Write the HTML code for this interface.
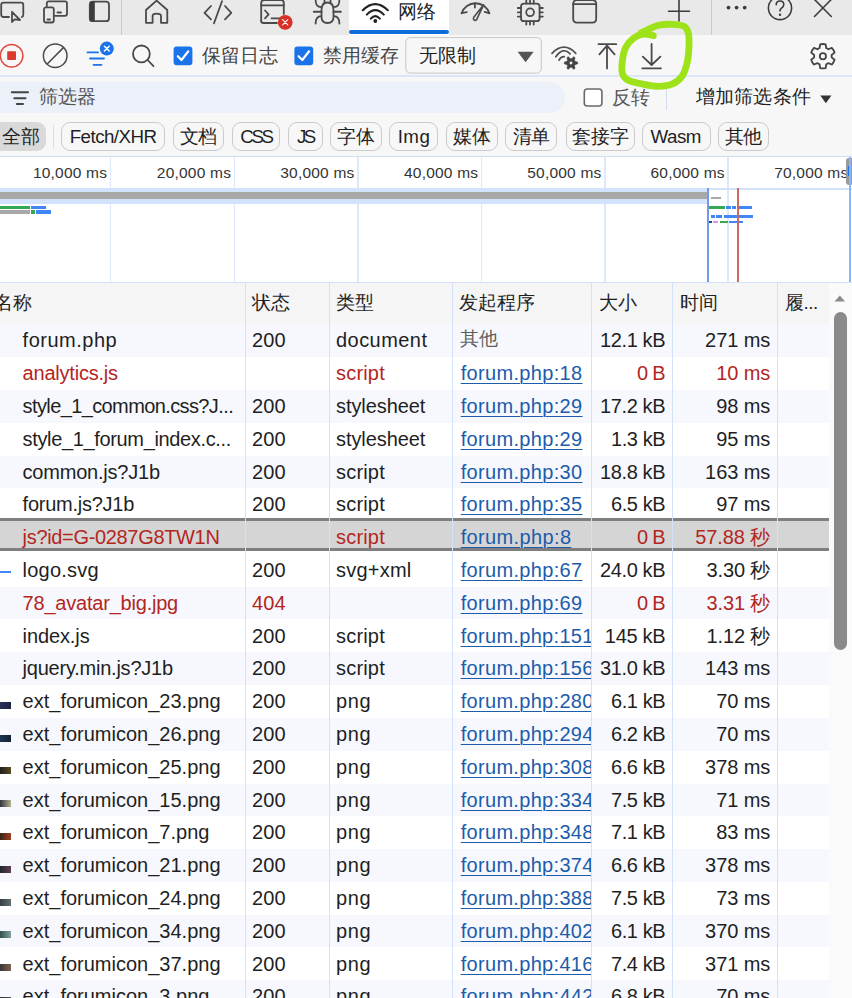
<!DOCTYPE html>
<html><head><meta charset="utf-8"><style>
*{margin:0;padding:0;box-sizing:border-box}
html,body{width:852px;height:998px;overflow:hidden;background:#fff}
body{position:relative;font-family:"Liberation Sans",sans-serif;font-size:20px;color:#1f1f1f}
.a{position:absolute}
.t{position:absolute;white-space:nowrap;line-height:1}
.red{color:#b3261e}
.gray{color:#5f5f5f}
.lab{color:#333}
.link{color:#1c5cab;text-decoration:underline;text-underline-offset:3px;text-decoration-thickness:1px}
svg{position:absolute;overflow:visible}
</style></head>
<body>
<div class="a" style="left:0;top:0;width:852px;height:35px;background:#e9e9e9"></div>
<div class="a" style="left:348.5px;top:0;width:100.5px;height:35px;background:#fff"></div>
<div class="a" style="left:348.5px;top:30px;width:100px;height:4px;background:#0f6cd6;border-radius:2px"></div>
<div class="a" style="left:121px;top:0;width:1px;height:35px;background:#c9c9c9"></div>
<div class="a" style="left:711px;top:0;width:1px;height:35px;background:#c9c9c9"></div>
<svg class="a" style="left:0;top:0" width="852" height="35" viewBox="0 0 852 35">
<g fill="none" stroke="#4a4a4a" stroke-width="1.8" stroke-linecap="round" stroke-linejoin="round">
<path d="M9 17 H3.5 Q1.2 17 1.2 14.5 V5 Q1.2 2.7 3.5 2.7 H21 Q23.3 2.7 23.3 5 V14.5 Q23.3 16.5 21.8 17"/>
<path d="M12 11.8 L12 22 L14.6 19.3 L20 20 Z"/>
<path d="M46.8 6.8 V3.3 Q46.8 1.3 48.8 1.3 H65 Q67 1.3 67 3.3 V13.8 Q67 15.8 65 15.8 H54.5"/>
<path d="M57.5 12.5 H61"/>
<rect x="44" y="7.3" width="9.8" height="15.2" rx="2"/>
<path d="M47.5 19.5 H50"/>
<rect x="89.8" y="1.6" width="19.2" height="19.6" rx="3"/>
</g>
<rect x="89.8" y="1.6" width="5" height="19.6" fill="#3c3c3c"/>
<g fill="none" stroke="#4a4a4a" stroke-width="1.8" stroke-linecap="round" stroke-linejoin="round">
<path d="M146 22.8 V10 L156.6 0.6 L167.3 10 V22.8 H161 V16 Q161 13.6 156.6 13.6 Q152.6 13.6 152.6 16 V22.8 Z"/>
<path d="M211 6 L204.5 12.8 L211 19.3"/>
<path d="M222 1.2 L214 23.3"/>
<path d="M225 6 L231.3 12.8 L225 19.3"/>
<path d="M261.2 21 V3 Q261.2 0 264 0 H281 Q283.8 0 283.8 3 V14"/>
<path d="M261.2 21 Q261.2 23 263.5 23 H277"/>
<path d="M261.2 5.3 H283.8"/>
<path d="M265 10.5 L268.6 14.3 L265 18.3"/>
<path d="M271.5 18.3 H280"/>
</g>
<circle cx="285.2" cy="22.3" r="7.4" fill="#d93025"/>
<path d="M282.6 19.7 L287.8 24.9 M287.8 19.7 L282.6 24.9" stroke="#fff" stroke-width="1.1" stroke-linecap="round"/>
<g fill="none" stroke="#4a4a4a" stroke-width="1.8" stroke-linecap="round" stroke-linejoin="round">
<path d="M321.5 10 Q321.5 2.5 327.5 2.5 Q333.5 2.5 333.5 10 V17 Q333.5 23 327.5 23 Q321.5 23 321.5 17 Z"/>
<path d="M313.8 11.7 H321.5 M333.5 11.7 H340.8" stroke-width="2"/>
<path d="M321.2 7.2 Q315.6 7 315.6 0 M333.8 7.2 Q339.4 7 339.4 0"/>
<path d="M321.2 16.2 Q315.6 16.4 315.6 23.5 M333.8 16.2 Q339.4 16.4 339.4 23.5"/>
<path d="M324.5 3 V0 M330.5 3 V0"/>
</g>
<g fill="none" stroke="#222" stroke-width="2.1" stroke-linecap="round">
<path d="M362.8 10.2 Q375.3 -2 387.8 10.2"/>
<path d="M366.8 14.6 Q375.3 5.6 383.8 14.6"/>
<path d="M370.8 18.6 Q375.3 13.6 379.8 18.6"/>
</g>
<circle cx="375.3" cy="21" r="1.9" fill="#1f1f1f"/>
<g fill="none" stroke="#4a4a4a" stroke-width="1.8" stroke-linecap="round" stroke-linejoin="round">
<path d="M461.6 13.4 A14.6 14.6 0 0 1 489.4 13.4"/>
<path d="M461.6 13.2 L466.8 12.2 M474.9 3.3 V7.6 M484.6 11.8 L489.2 13.2"/>
<path d="M483.6 4.8 L476.6 19.6 Q475.2 21 473.9 19.9 Q473 19 473.6 17.6 Z" stroke-width="1.6"/>
</g>
<g fill="none" stroke="#4a4a4a" stroke-width="1.8" stroke-linecap="round" stroke-linejoin="round">
<rect x="521" y="3.6" width="18.6" height="17.6" rx="3"/>
<circle cx="530.1" cy="12.3" r="3.9"/>
<path d="M526.3 3.6 V0.5 M530 3.6 V0.5 M533.7 3.6 V0.5 M526.3 21.2 V24.6 M530 21.2 V24.6 M533.7 21.2 V24.6"/>
<path d="M521 8 H517.8 M521 12.3 H517.8 M521 16.6 H517.8 M539.6 8 H542.8 M539.6 12.3 H542.8 M539.6 16.6 H542.8"/>
</g>
<g fill="none" stroke="#4a4a4a" stroke-width="1.8" stroke-linecap="round" stroke-linejoin="round">
<path d="M573.2 4 Q573.2 0 577 0 H592.3 Q596.2 0 596.2 4 V18.8 Q596.2 22.6 592.3 22.6 H577 Q573.2 22.6 573.2 18.8 Z"/>
<path d="M573.2 4.2 H596.2"/>
</g>
<g fill="none" stroke="#3c3c3c" stroke-width="1.6" stroke-linecap="round">
<path d="M668.5 11.2 H689.5 M679 0 V21"/>
<path d="M814.5 -0.5 L831.3 16.5 M831.3 -0.5 L814.5 16.5"/>
<circle cx="780" cy="8" r="11.6"/>
<path d="M776.2 4.8 Q776.2 1 780 1 Q783.8 1 783.8 4.6 Q783.8 7 781.4 8.2 Q780 9 780 11"/>
</g>
<circle cx="780" cy="14.8" r="1.2" fill="#3c3c3c"/>
<circle cx="728.5" cy="7.6" r="1.9" fill="#3c3c3c"/>
<circle cx="736.6" cy="7.6" r="1.9" fill="#3c3c3c"/>
<circle cx="744.7" cy="7.6" r="1.9" fill="#3c3c3c"/>
</svg>
<div class="t " style="left:398px;top:2.5px;font-size:18.75px;color:#1f1f1f">网络</div>
<div class="a" style="left:0;top:35px;width:852px;height:40px;background:#f7f7f7"></div>
<div class="a" style="left:0;top:75px;width:852px;height:2px;background:#dce6f6"></div>
<svg class="a" style="left:0;top:35px" width="852" height="40" viewBox="0 35 852 40">
<circle cx="11.6" cy="55.7" r="11.3" fill="none" stroke="#e04a40" stroke-width="1.5"/>
<rect x="7.2" y="51.3" width="8.8" height="8.8" rx="0.8" fill="#dc3a30"/>
<g fill="none" stroke="#4a4a4a" stroke-width="1.8" stroke-linecap="round" stroke-linejoin="round">
<circle cx="55.2" cy="55.7" r="11.8" stroke-width="1.5"/>
<path d="M47.2 64 L63.4 47.6" stroke-width="1.5"/>
<circle cx="141.4" cy="53.9" r="8.4"/>
<path d="M147.6 60 L153.5 66.2"/>
</g>
<g fill="none" stroke="#1a73e8" stroke-width="1.8" stroke-linecap="round">
<path d="M87.5 52.4 H98 M90 58.5 H104 M93.5 64.8 H101.5"/>
</g>
<circle cx="106.8" cy="48.6" r="7" fill="#1a73e8"/>
<path d="M104.4 46.2 L109.2 51 M109.2 46.2 L104.4 51" stroke="#fff" stroke-width="1.5" stroke-linecap="round"/>
<rect x="173.6" y="46.5" width="18.8" height="18.8" rx="3" fill="#1a73e8"/>
<path d="M177.8 56.2 L181.5 60 L188.3 51.3" fill="none" stroke="#fff" stroke-width="2.2" stroke-linecap="round" stroke-linejoin="round"/>
<rect x="294.4" y="46.5" width="18.8" height="18.8" rx="3" fill="#1a73e8"/>
<path d="M298.6 56.2 L302.3 60 L309.1 51.3" fill="none" stroke="#fff" stroke-width="2.2" stroke-linecap="round" stroke-linejoin="round"/>
<rect x="405.8" y="37.6" width="135.5" height="35.5" rx="4.5" fill="#f7f7f7" stroke="#c6c6c6" stroke-width="1"/>
<path d="M517.6 51.8 H533.6 L525.6 62.2 Z" fill="#555"/>
<g fill="none" stroke="#4a4a4a" stroke-width="1.8" stroke-linecap="round" stroke-linejoin="round">
<path d="M552 53.3 Q564 41 575.8 53.3" stroke="#505050" stroke-width="1.7"/>
<path d="M555.8 56.8 Q563 46.5 570.2 53.8" stroke="#505050" stroke-width="1.7"/>
<path d="M559 60.2 Q560.8 56.6 564.3 56.7" stroke="#505050" stroke-width="1.7"/>
<path d="M607 68.5 V45 M598.5 44.2 H616.2 M599.4 54.3 L607 45.6 L614.6 54.3"/>
<path d="M651.6 44 V64.5 M642.8 56.6 L651.6 65 L660.4 56.6 M642.3 68.3 H661"/>
</g>
<path d="M574.93 61.25 L577.76 62.29 L577.76 63.71 L574.93 64.75 L574.48 65.53 L575.00 68.50 L573.77 69.21 L571.45 67.28 L570.55 67.28 L568.23 69.21 L567.00 68.50 L567.52 65.53 L567.07 64.75 L564.24 63.71 L564.24 62.29 L567.07 61.25 L567.52 60.47 L567.00 57.50 L568.23 56.79 L570.55 58.72 L571.45 58.72 L573.77 56.79 L575.00 57.50 L574.48 60.47 Z" fill="#444" stroke="#444" stroke-width="0.6" stroke-linejoin="round"/>
<circle cx="571" cy="63" r="1.4" fill="#f7f7f7"/>
<g fill="none" stroke="#444" stroke-width="1.8" stroke-linejoin="round">
<path d="M819.60 48.04 L820.16 44.31 A12.2 12.2 0 0 1 825.64 44.31 L826.20 48.04 A8.8 8.8 0 0 1 828.32 49.27 L831.82 47.88 A12.2 12.2 0 0 1 834.57 52.63 L831.61 54.98 A8.8 8.8 0 0 1 831.61 57.42 L834.57 59.77 A12.2 12.2 0 0 1 831.82 64.52 L828.32 63.13 A8.8 8.8 0 0 1 826.20 64.36 L825.64 68.09 A12.2 12.2 0 0 1 820.16 68.09 L819.60 64.36 A8.8 8.8 0 0 1 817.48 63.13 L813.98 64.52 A12.2 12.2 0 0 1 811.23 59.77 L814.19 57.42 A8.8 8.8 0 0 1 814.19 54.98 L811.23 52.63 A12.2 12.2 0 0 1 813.98 47.88 L817.48 49.27 A8.8 8.8 0 0 1 819.60 48.04 Z"/>
<circle cx="822.9" cy="56.2" r="3.1"/>
</g>
</svg>
<div class="t " style="left:202.4px;top:46.5px;font-size:18.75px;color:#444">保留日志</div>
<div class="t " style="left:322.6px;top:46.5px;font-size:18.75px;color:#444">禁用缓存</div>
<div class="t " style="left:418.8px;top:46.5px;font-size:18.75px;color:#1f1f1f">无限制</div>
<div class="a" style="left:0;top:77px;width:852px;height:80px;background:#f7f7f7"></div>
<div class="a" style="left:-20px;top:81.5px;width:584.5px;height:31px;background:#ebf0f9;border-radius:15.5px"></div>
<svg class="a" style="left:0;top:77px" width="852" height="80" viewBox="0 77 852 80">
<path d="M11.8 92.3 H28 M14.3 98.2 H25.5 M16.8 104 H23" stroke="#444" stroke-width="2" stroke-linecap="round"/>
<rect x="584.3" y="89" width="17.6" height="17" rx="3" fill="#fff" stroke="#6a6a6a" stroke-width="1.6"/>
<path d="M820.3 95.5 H831.4 L825.85 103.2 Z" fill="#333"/>
</svg>
<div class="a" style="left:666px;top:87px;width:1.2px;height:23px;background:#d3def2"></div>
<div class="t " style="left:38.5px;top:88px;font-size:18.75px;color:#555">筛选器</div>
<div class="t " style="left:611.6px;top:88.5px;font-size:18.75px;color:#555">反转</div>
<div class="t " style="left:696.2px;top:88px;font-size:18.75px;color:#1f1f1f;letter-spacing:0.1px">增加筛选条件</div>
<div class="a" style="left:-10px;top:122px;width:56px;height:29.4px;background:#d9d9d9;border-radius:9px"></div>
<div class="t " style="left:2.3px;top:127.5px;font-size:18.75px;">全部</div>
<div class="a" style="left:52.5px;top:124.5px;width:1.2px;height:24.5px;background:#d3def2"></div>
<div class="a" style="left:60.6px;top:122px;width:104.9px;height:29.4px;border:1.2px solid #cbcbcb;border-radius:9px;background:#f7f7f7"></div>
<div class="t " style="left:69.7px;top:128.2px;letter-spacing:-0.55px;font-size:18.75px;">Fetch/XHR</div>
<div class="a" style="left:172.5px;top:122px;width:51.900000000000006px;height:29.4px;border:1.2px solid #cbcbcb;border-radius:9px;background:#f7f7f7"></div>
<div class="t " style="left:179.7px;top:128.2px;letter-spacing:-0.19px;font-size:18.75px;">文档</div>
<div class="a" style="left:231.7px;top:122px;width:48.60000000000002px;height:29.4px;border:1.2px solid #cbcbcb;border-radius:9px;background:#f7f7f7"></div>
<div class="t " style="left:240.3px;top:128.2px;letter-spacing:-2.39px;font-size:18.75px;">CSS</div>
<div class="a" style="left:288px;top:122px;width:34.5px;height:29.4px;border:1.2px solid #cbcbcb;border-radius:9px;background:#f7f7f7"></div>
<div class="t " style="left:297.0px;top:128.2px;letter-spacing:-2.68px;font-size:18.75px;">JS</div>
<div class="a" style="left:330.3px;top:122px;width:51.39999999999998px;height:29.4px;border:1.2px solid #cbcbcb;border-radius:9px;background:#f7f7f7"></div>
<div class="t " style="left:337.2px;top:128.2px;letter-spacing:-0.19px;font-size:18.75px;">字体</div>
<div class="a" style="left:389.4px;top:122px;width:49.10000000000002px;height:29.4px;border:1.2px solid #cbcbcb;border-radius:9px;background:#f7f7f7"></div>
<div class="t " style="left:397.7px;top:128.2px;letter-spacing:0.43px;font-size:18.75px;">Img</div>
<div class="a" style="left:446.4px;top:122px;width:51.400000000000034px;height:29.4px;border:1.2px solid #cbcbcb;border-radius:9px;background:#f7f7f7"></div>
<div class="t " style="left:453.4px;top:128.2px;letter-spacing:-0.19px;font-size:18.75px;">媒体</div>
<div class="a" style="left:505.2px;top:122px;width:52.19999999999999px;height:29.4px;border:1.2px solid #cbcbcb;border-radius:9px;background:#f7f7f7"></div>
<div class="t " style="left:512.5px;top:128.2px;letter-spacing:-0.19px;font-size:18.75px;">清单</div>
<div class="a" style="left:565.6px;top:122px;width:69.0px;height:29.4px;border:1.2px solid #cbcbcb;border-radius:9px;background:#f7f7f7"></div>
<div class="t " style="left:572.0px;top:128.2px;letter-spacing:-0.19px;font-size:18.75px;">套接字</div>
<div class="a" style="left:641.6px;top:122px;width:69.0px;height:29.4px;border:1.2px solid #cbcbcb;border-radius:9px;background:#f7f7f7"></div>
<div class="t " style="left:650.6px;top:128.2px;letter-spacing:-0.55px;font-size:18.75px;">Wasm</div>
<div class="a" style="left:717.6px;top:122px;width:51.39999999999998px;height:29.4px;border:1.2px solid #cbcbcb;border-radius:9px;background:#f7f7f7"></div>
<div class="t " style="left:724.5px;top:128.2px;letter-spacing:-0.19px;font-size:18.75px;">其他</div>
<div class="a" style="left:0;top:155.5px;width:852px;height:1.5px;background:#d3def2"></div>
<div class="a" style="left:0;top:157px;width:852px;height:125px;background:#fff"></div>
<div class="a" style="left:109.8px;top:157px;width:1.5px;height:125px;background:#dde8fb"></div>
<div class="a" style="left:233.7px;top:157px;width:1.5px;height:125px;background:#dde8fb"></div>
<div class="a" style="left:357.1px;top:157px;width:1.5px;height:125px;background:#dde8fb"></div>
<div class="a" style="left:480.9px;top:157px;width:1.5px;height:125px;background:#dde8fb"></div>
<div class="a" style="left:604.1px;top:157px;width:1.5px;height:125px;background:#dde8fb"></div>
<div class="a" style="left:727.4px;top:157px;width:1.5px;height:125px;background:#dde8fb"></div>
<div class="a" style="left:0;top:188px;width:852px;height:1.5px;background:#d3e2fb"></div>
<div class="t lab" style="right:745.0px;top:164.5px;letter-spacing:0.21px;margin-right:-0.21px;font-size:15.5px;">10,000 ms</div>
<div class="t lab" style="right:621.1px;top:164.5px;letter-spacing:0.21px;margin-right:-0.21px;font-size:15.5px;">20,000 ms</div>
<div class="t lab" style="right:497.7px;top:164.5px;letter-spacing:0.21px;margin-right:-0.21px;font-size:15.5px;">30,000 ms</div>
<div class="t lab" style="right:373.90000000000003px;top:164.5px;letter-spacing:0.21px;margin-right:-0.21px;font-size:15.5px;">40,000 ms</div>
<div class="t lab" style="right:250.69999999999993px;top:164.5px;letter-spacing:0.21px;margin-right:-0.21px;font-size:15.5px;">50,000 ms</div>
<div class="t lab" style="right:127.39999999999998px;top:164.5px;letter-spacing:0.21px;margin-right:-0.21px;font-size:15.5px;">60,000 ms</div>
<div class="t lab" style="right:3.7999999999999545px;top:164.5px;letter-spacing:0.21px;margin-right:-0.21px;font-size:15.5px;">70,000 ms</div>
<div class="a" style="left:845.5px;top:158px;width:8px;height:27px;background:#9a9a9a;border-radius:3px"></div>
<div class="a" style="left:848.2px;top:166px;width:2px;height:10px;background:#1a73e8"></div>
<div class="a" style="left:849px;top:157px;width:1.5px;height:125px;background:#8ab4f8"></div>
<div class="a" style="left:0;top:188.6px;width:707.5px;height:15.4px;background:#d3e3fd"></div>
<div class="a" style="left:0;top:192px;width:707.5px;height:7px;background:#a8a8a8"></div>
<div class="a" style="left:0px;top:205.6px;width:30px;height:3.3px;background:#34a853"></div>
<div class="a" style="left:0px;top:210.4px;width:30px;height:3.6px;background:#a8a8a8"></div>
<div class="a" style="left:31px;top:206px;width:14.799999999999997px;height:3px;background:#4285f4"></div>
<div class="a" style="left:31px;top:210.4px;width:4px;height:3.6px;background:#34a853"></div>
<div class="a" style="left:36.2px;top:210.4px;width:14.399999999999999px;height:3.6px;background:#4285f4"></div>
<div class="a" style="left:711px;top:196.8px;width:10.200000000000045px;height:2.6px;background:#a8a8a8"></div>
<div class="a" style="left:708.5px;top:205.9px;width:16.5px;height:3px;background:#34a853"></div>
<div class="a" style="left:726.2px;top:205.9px;width:4.5px;height:3px;background:#4285f4"></div>
<div class="a" style="left:732.3px;top:205.9px;width:3.7000000000000455px;height:3px;background:#4285f4"></div>
<div class="a" style="left:738px;top:205.9px;width:13.600000000000023px;height:3px;background:#4285f4"></div>
<div class="a" style="left:711px;top:215.3px;width:3.7000000000000455px;height:3px;background:#4285f4"></div>
<div class="a" style="left:716.3px;top:215.3px;width:5.7000000000000455px;height:3px;background:#4285f4"></div>
<div class="a" style="left:723.7px;top:215.3px;width:29.199999999999932px;height:3px;background:#4285f4"></div>
<div class="a" style="left:707.3px;top:220.7px;width:4.900000000000091px;height:2.5px;background:#01579b"></div>
<div class="a" style="left:713.4px;top:220.7px;width:4.600000000000023px;height:2.5px;background:#e68df5"></div>
<div class="a" style="left:719.6px;top:220.7px;width:8.199999999999932px;height:2.5px;background:#34a853"></div>
<div class="a" style="left:729.3px;top:220.7px;width:13.900000000000091px;height:2.5px;background:#4285f4"></div>
<div class="a" style="left:706.9px;top:188px;width:2.6px;height:94px;background:#6f9be8"></div>
<div class="a" style="left:736.9px;top:188px;width:2.4px;height:94px;background:#cc6a60"></div>
<div class="a" style="left:0;top:282px;width:852px;height:42px;background:#f5f5f5"></div>
<div class="a" style="left:0;top:281.5px;width:852px;height:1.5px;background:#d3e2fb"></div>
<div class="a" style="left:0;top:323.6px;width:828.5px;height:1.5px;background:#d3e2fb"></div>
<div class="a" style="left:0;top:324.3px;width:828.5px;height:32.8px;background:#f6f8fd"></div>
<div class="a" style="left:0;top:389.9px;width:828.5px;height:32.8px;background:#f6f8fd"></div>
<div class="a" style="left:0;top:455.5px;width:828.5px;height:32.8px;background:#f6f8fd"></div>
<div class="a" style="left:0;top:518.0px;width:828.5px;height:32.5px;background:#d5d5d5;border-top:3.3px solid #7f7f7f;border-bottom:3.2px solid #7f7f7f"></div>
<div class="a" style="left:0;top:586.7px;width:828.5px;height:32.8px;background:#f6f8fd"></div>
<div class="a" style="left:0;top:652.3px;width:828.5px;height:32.8px;background:#f6f8fd"></div>
<div class="a" style="left:0;top:717.9px;width:828.5px;height:32.8px;background:#f6f8fd"></div>
<div class="a" style="left:0;top:783.5px;width:828.5px;height:32.8px;background:#f6f8fd"></div>
<div class="a" style="left:0;top:849.0999999999999px;width:828.5px;height:32.8px;background:#f6f8fd"></div>
<div class="a" style="left:0;top:914.7px;width:828.5px;height:32.8px;background:#f6f8fd"></div>
<div class="a" style="left:0;top:980.3px;width:828.5px;height:32.8px;background:#f6f8fd"></div>
<div class="a" style="left:244.9px;top:282px;width:1.2px;height:716px;background:#d3e2fb"></div>
<div class="a" style="left:328.59999999999997px;top:282px;width:1.2px;height:716px;background:#d3e2fb"></div>
<div class="a" style="left:452.29999999999995px;top:282px;width:1.2px;height:716px;background:#d3e2fb"></div>
<div class="a" style="left:591.0px;top:282px;width:1.2px;height:716px;background:#d3e2fb"></div>
<div class="a" style="left:672.0px;top:282px;width:1.2px;height:716px;background:#d3e2fb"></div>
<div class="a" style="left:777.1999999999999px;top:282px;width:1.2px;height:716px;background:#d3e2fb"></div>
<div class="t " style="left:-6.5px;top:293.5px;font-size:18.75px;">名称</div>
<div class="t " style="left:252px;top:293.5px;font-size:18.75px;">状态</div>
<div class="t " style="left:336px;top:293.5px;font-size:18.75px;">类型</div>
<div class="t " style="left:459.3px;top:293.5px;font-size:18.75px;">发起程序</div>
<div class="t " style="left:598.5px;top:293.5px;font-size:18.75px;">大小</div>
<div class="t " style="left:679.5px;top:293.5px;font-size:18.75px;">时间</div>
<div class="t " style="left:785px;top:293.5px;letter-spacing:-0.47px;font-size:18.75px;">履...</div>
<div class="t " style="left:22.6px;top:330.3px;letter-spacing:0.5px;">forum.php</div>
<div class="t " style="left:252.1px;top:330.3px;letter-spacing:0.06px;">200</div>
<div class="t " style="left:336px;top:330.3px;letter-spacing:0.45px;">document</div>
<div class="t gray" style="left:460px;top:330.3px;font-size:18.75px;">其他</div>
<div class="t " style="right:186.39999999999998px;top:330.3px;letter-spacing:-0.35px;margin-right:0.35px;">12.1 kB</div>
<div class="t " style="right:81.70000000000005px;top:330.3px;letter-spacing:-0.07px;margin-right:0.07px;">271 ms</div>
<div class="t red" style="left:22.6px;top:363.1px;letter-spacing:-0.21px;">analytics.js</div>
<div class="t red" style="left:336px;top:363.1px;letter-spacing:0.19px;">script</div>
<div class="a" style="left:452.9px;top:357.1px;width:138.6px;height:32.8px;overflow:hidden"><div class="t link" style="left:7.8px;top:6.0px;letter-spacing:0.33px;">forum.php:18</div></div>
<div class="t red" style="right:186.39999999999998px;top:363.1px;letter-spacing:-0.68px;margin-right:0.68px;">0 B</div>
<div class="t red" style="right:81.70000000000005px;top:363.1px;letter-spacing:-0.09px;margin-right:0.09px;">10 ms</div>
<div class="t " style="left:22.6px;top:395.9px;letter-spacing:-0.61px;">style_1_common.css?J...</div>
<div class="t " style="left:252.1px;top:395.9px;letter-spacing:0.06px;">200</div>
<div class="t " style="left:336px;top:395.9px;letter-spacing:-0.08px;">stylesheet</div>
<div class="a" style="left:452.9px;top:389.9px;width:138.6px;height:32.8px;overflow:hidden"><div class="t link" style="left:7.8px;top:6.0px;letter-spacing:0.33px;">forum.php:29</div></div>
<div class="t " style="right:186.39999999999998px;top:395.9px;letter-spacing:-0.35px;margin-right:0.35px;">17.2 kB</div>
<div class="t " style="right:81.70000000000005px;top:395.9px;letter-spacing:-0.09px;margin-right:0.09px;">98 ms</div>
<div class="t " style="left:22.6px;top:428.7px;letter-spacing:-0.35px;">style_1_forum_index.c...</div>
<div class="t " style="left:252.1px;top:428.7px;letter-spacing:0.06px;">200</div>
<div class="t " style="left:336px;top:428.7px;letter-spacing:-0.08px;">stylesheet</div>
<div class="a" style="left:452.9px;top:422.7px;width:138.6px;height:32.8px;overflow:hidden"><div class="t link" style="left:7.8px;top:6.0px;letter-spacing:0.33px;">forum.php:29</div></div>
<div class="t " style="right:186.39999999999998px;top:428.7px;letter-spacing:-0.41px;margin-right:0.41px;">1.3 kB</div>
<div class="t " style="right:81.70000000000005px;top:428.7px;letter-spacing:-0.09px;margin-right:0.09px;">95 ms</div>
<div class="t " style="left:22.6px;top:461.5px;letter-spacing:-0.22px;">common.js?J1b</div>
<div class="t " style="left:252.1px;top:461.5px;letter-spacing:0.06px;">200</div>
<div class="t " style="left:336px;top:461.5px;letter-spacing:0.19px;">script</div>
<div class="a" style="left:452.9px;top:455.5px;width:138.6px;height:32.8px;overflow:hidden"><div class="t link" style="left:7.8px;top:6.0px;letter-spacing:0.33px;">forum.php:30</div></div>
<div class="t " style="right:186.39999999999998px;top:461.5px;letter-spacing:-0.35px;margin-right:0.35px;">18.8 kB</div>
<div class="t " style="right:81.70000000000005px;top:461.5px;letter-spacing:-0.07px;margin-right:0.07px;">163 ms</div>
<div class="t " style="left:22.6px;top:494.3px;letter-spacing:-0.25px;">forum.js?J1b</div>
<div class="t " style="left:252.1px;top:494.3px;letter-spacing:0.06px;">200</div>
<div class="t " style="left:336px;top:494.3px;letter-spacing:0.19px;">script</div>
<div class="a" style="left:452.9px;top:488.3px;width:138.6px;height:32.8px;overflow:hidden"><div class="t link" style="left:7.8px;top:6.0px;letter-spacing:0.33px;">forum.php:35</div></div>
<div class="t " style="right:186.39999999999998px;top:494.3px;letter-spacing:-0.41px;margin-right:0.41px;">6.5 kB</div>
<div class="t " style="right:81.70000000000005px;top:494.3px;letter-spacing:-0.09px;margin-right:0.09px;">97 ms</div>
<div class="t red" style="left:22.6px;top:527.1px;letter-spacing:-0.33px;">js?id=G-0287G8TW1N</div>
<div class="t red" style="left:336px;top:527.1px;letter-spacing:0.19px;">script</div>
<div class="a" style="left:452.9px;top:521.1px;width:138.6px;height:32.8px;overflow:hidden"><div class="t link" style="left:7.8px;top:6.0px;letter-spacing:0.36px;">forum.php:8</div></div>
<div class="t red" style="right:186.39999999999998px;top:527.1px;letter-spacing:-0.68px;margin-right:0.68px;">0 B</div>
<div class="t red" style="right:81.70000000000005px;top:527.1px;letter-spacing:-0.1px;margin-right:0.1px;">57.88 秒</div>
<div class="t " style="left:22.6px;top:559.9px;letter-spacing:0.22px;">logo.svg</div>
<div class="t " style="left:252.1px;top:559.9px;letter-spacing:0.06px;">200</div>
<div class="t " style="left:336px;top:559.9px;letter-spacing:0.23px;">svg+xml</div>
<div class="a" style="left:452.9px;top:553.9px;width:138.6px;height:32.8px;overflow:hidden"><div class="t link" style="left:7.8px;top:6.0px;letter-spacing:0.33px;">forum.php:67</div></div>
<div class="t " style="right:186.39999999999998px;top:559.9px;letter-spacing:-0.35px;margin-right:0.35px;">24.0 kB</div>
<div class="t " style="right:81.70000000000005px;top:559.9px;letter-spacing:-0.12px;margin-right:0.12px;">3.30 秒</div>
<div class="t red" style="left:22.6px;top:592.7px;letter-spacing:-0.21px;">78_avatar_big.jpg</div>
<div class="t red" style="left:252.1px;top:592.7px;letter-spacing:0.06px;">404</div>
<div class="a" style="left:452.9px;top:586.7px;width:138.6px;height:32.8px;overflow:hidden"><div class="t link" style="left:7.8px;top:6.0px;letter-spacing:0.33px;">forum.php:69</div></div>
<div class="t red" style="right:186.39999999999998px;top:592.7px;letter-spacing:-0.68px;margin-right:0.68px;">0 B</div>
<div class="t red" style="right:81.70000000000005px;top:592.7px;letter-spacing:-0.12px;margin-right:0.12px;">3.31 秒</div>
<div class="t " style="left:22.6px;top:625.5px;letter-spacing:-0.11px;">index.js</div>
<div class="t " style="left:252.1px;top:625.5px;letter-spacing:0.06px;">200</div>
<div class="t " style="left:336px;top:625.5px;letter-spacing:0.19px;">script</div>
<div class="a" style="left:452.9px;top:619.5px;width:138.6px;height:32.8px;overflow:hidden"><div class="t link" style="left:7.8px;top:6.0px;letter-spacing:0.31px;">forum.php:151</div></div>
<div class="t " style="right:186.39999999999998px;top:625.5px;letter-spacing:-0.3px;margin-right:0.3px;">145 kB</div>
<div class="t " style="right:81.70000000000005px;top:625.5px;letter-spacing:-0.12px;margin-right:0.12px;">1.12 秒</div>
<div class="t " style="left:22.6px;top:658.3px;letter-spacing:-0.23px;">jquery.min.js?J1b</div>
<div class="t " style="left:252.1px;top:658.3px;letter-spacing:0.06px;">200</div>
<div class="t " style="left:336px;top:658.3px;letter-spacing:0.19px;">script</div>
<div class="a" style="left:452.9px;top:652.3px;width:138.6px;height:32.8px;overflow:hidden"><div class="t link" style="left:7.8px;top:6.0px;letter-spacing:0.31px;">forum.php:156</div></div>
<div class="t " style="right:186.39999999999998px;top:658.3px;letter-spacing:-0.35px;margin-right:0.35px;">31.0 kB</div>
<div class="t " style="right:81.70000000000005px;top:658.3px;letter-spacing:-0.07px;margin-right:0.07px;">143 ms</div>
<div class="t " style="left:22.6px;top:691.0999999999999px;">ext_forumicon_23.png</div>
<div class="t " style="left:252.1px;top:691.0999999999999px;letter-spacing:0.06px;">200</div>
<div class="t " style="left:336px;top:691.0999999999999px;letter-spacing:0.62px;">png</div>
<div class="a" style="left:452.9px;top:685.0999999999999px;width:138.6px;height:32.8px;overflow:hidden"><div class="t link" style="left:7.8px;top:6.0px;letter-spacing:0.31px;">forum.php:280</div></div>
<div class="t " style="right:186.39999999999998px;top:691.0999999999999px;letter-spacing:-0.41px;margin-right:0.41px;">6.1 kB</div>
<div class="t " style="right:81.70000000000005px;top:691.0999999999999px;letter-spacing:-0.09px;margin-right:0.09px;">70 ms</div>
<div class="t " style="left:22.6px;top:723.9px;">ext_forumicon_26.png</div>
<div class="t " style="left:252.1px;top:723.9px;letter-spacing:0.06px;">200</div>
<div class="t " style="left:336px;top:723.9px;letter-spacing:0.62px;">png</div>
<div class="a" style="left:452.9px;top:717.9px;width:138.6px;height:32.8px;overflow:hidden"><div class="t link" style="left:7.8px;top:6.0px;letter-spacing:0.31px;">forum.php:294</div></div>
<div class="t " style="right:186.39999999999998px;top:723.9px;letter-spacing:-0.41px;margin-right:0.41px;">6.2 kB</div>
<div class="t " style="right:81.70000000000005px;top:723.9px;letter-spacing:-0.09px;margin-right:0.09px;">70 ms</div>
<div class="t " style="left:22.6px;top:756.7px;">ext_forumicon_25.png</div>
<div class="t " style="left:252.1px;top:756.7px;letter-spacing:0.06px;">200</div>
<div class="t " style="left:336px;top:756.7px;letter-spacing:0.62px;">png</div>
<div class="a" style="left:452.9px;top:750.7px;width:138.6px;height:32.8px;overflow:hidden"><div class="t link" style="left:7.8px;top:6.0px;letter-spacing:0.31px;">forum.php:308</div></div>
<div class="t " style="right:186.39999999999998px;top:756.7px;letter-spacing:-0.41px;margin-right:0.41px;">6.6 kB</div>
<div class="t " style="right:81.70000000000005px;top:756.7px;letter-spacing:-0.07px;margin-right:0.07px;">378 ms</div>
<div class="t " style="left:22.6px;top:789.5px;">ext_forumicon_15.png</div>
<div class="t " style="left:252.1px;top:789.5px;letter-spacing:0.06px;">200</div>
<div class="t " style="left:336px;top:789.5px;letter-spacing:0.62px;">png</div>
<div class="a" style="left:452.9px;top:783.5px;width:138.6px;height:32.8px;overflow:hidden"><div class="t link" style="left:7.8px;top:6.0px;letter-spacing:0.31px;">forum.php:334</div></div>
<div class="t " style="right:186.39999999999998px;top:789.5px;letter-spacing:-0.41px;margin-right:0.41px;">7.5 kB</div>
<div class="t " style="right:81.70000000000005px;top:789.5px;letter-spacing:-0.09px;margin-right:0.09px;">71 ms</div>
<div class="t " style="left:22.6px;top:822.3px;">ext_forumicon_7.png</div>
<div class="t " style="left:252.1px;top:822.3px;letter-spacing:0.06px;">200</div>
<div class="t " style="left:336px;top:822.3px;letter-spacing:0.62px;">png</div>
<div class="a" style="left:452.9px;top:816.3px;width:138.6px;height:32.8px;overflow:hidden"><div class="t link" style="left:7.8px;top:6.0px;letter-spacing:0.31px;">forum.php:348</div></div>
<div class="t " style="right:186.39999999999998px;top:822.3px;letter-spacing:-0.41px;margin-right:0.41px;">7.1 kB</div>
<div class="t " style="right:81.70000000000005px;top:822.3px;letter-spacing:-0.09px;margin-right:0.09px;">83 ms</div>
<div class="t " style="left:22.6px;top:855.0999999999999px;">ext_forumicon_21.png</div>
<div class="t " style="left:252.1px;top:855.0999999999999px;letter-spacing:0.06px;">200</div>
<div class="t " style="left:336px;top:855.0999999999999px;letter-spacing:0.62px;">png</div>
<div class="a" style="left:452.9px;top:849.0999999999999px;width:138.6px;height:32.8px;overflow:hidden"><div class="t link" style="left:7.8px;top:6.0px;letter-spacing:0.31px;">forum.php:374</div></div>
<div class="t " style="right:186.39999999999998px;top:855.0999999999999px;letter-spacing:-0.41px;margin-right:0.41px;">6.6 kB</div>
<div class="t " style="right:81.70000000000005px;top:855.0999999999999px;letter-spacing:-0.07px;margin-right:0.07px;">378 ms</div>
<div class="t " style="left:22.6px;top:887.8999999999999px;">ext_forumicon_24.png</div>
<div class="t " style="left:252.1px;top:887.8999999999999px;letter-spacing:0.06px;">200</div>
<div class="t " style="left:336px;top:887.8999999999999px;letter-spacing:0.62px;">png</div>
<div class="a" style="left:452.9px;top:881.8999999999999px;width:138.6px;height:32.8px;overflow:hidden"><div class="t link" style="left:7.8px;top:6.0px;letter-spacing:0.31px;">forum.php:388</div></div>
<div class="t " style="right:186.39999999999998px;top:887.8999999999999px;letter-spacing:-0.41px;margin-right:0.41px;">7.5 kB</div>
<div class="t " style="right:81.70000000000005px;top:887.8999999999999px;letter-spacing:-0.09px;margin-right:0.09px;">73 ms</div>
<div class="t " style="left:22.6px;top:920.7px;">ext_forumicon_34.png</div>
<div class="t " style="left:252.1px;top:920.7px;letter-spacing:0.06px;">200</div>
<div class="t " style="left:336px;top:920.7px;letter-spacing:0.62px;">png</div>
<div class="a" style="left:452.9px;top:914.7px;width:138.6px;height:32.8px;overflow:hidden"><div class="t link" style="left:7.8px;top:6.0px;letter-spacing:0.31px;">forum.php:402</div></div>
<div class="t " style="right:186.39999999999998px;top:920.7px;letter-spacing:-0.41px;margin-right:0.41px;">6.1 kB</div>
<div class="t " style="right:81.70000000000005px;top:920.7px;letter-spacing:-0.07px;margin-right:0.07px;">370 ms</div>
<div class="t " style="left:22.6px;top:953.5px;">ext_forumicon_37.png</div>
<div class="t " style="left:252.1px;top:953.5px;letter-spacing:0.06px;">200</div>
<div class="t " style="left:336px;top:953.5px;letter-spacing:0.62px;">png</div>
<div class="a" style="left:452.9px;top:947.5px;width:138.6px;height:32.8px;overflow:hidden"><div class="t link" style="left:7.8px;top:6.0px;letter-spacing:0.31px;">forum.php:416</div></div>
<div class="t " style="right:186.39999999999998px;top:953.5px;letter-spacing:-0.41px;margin-right:0.41px;">7.4 kB</div>
<div class="t " style="right:81.70000000000005px;top:953.5px;letter-spacing:-0.07px;margin-right:0.07px;">371 ms</div>
<div class="t " style="left:22.6px;top:986.3px;">ext_forumicon_3.png</div>
<div class="t " style="left:252.1px;top:986.3px;letter-spacing:0.06px;">200</div>
<div class="t " style="left:336px;top:986.3px;letter-spacing:0.62px;">png</div>
<div class="a" style="left:452.9px;top:980.3px;width:138.6px;height:32.8px;overflow:hidden"><div class="t link" style="left:7.8px;top:6.0px;letter-spacing:0.31px;">forum.php:442</div></div>
<div class="t " style="right:186.39999999999998px;top:986.3px;letter-spacing:-0.41px;margin-right:0.41px;">6.8 kB</div>
<div class="t " style="right:81.70000000000005px;top:986.3px;letter-spacing:-0.09px;margin-right:0.09px;">70 ms</div>
<div class="a" style="left:0;top:701.8px;width:11px;height:7px;background:linear-gradient(90deg,#2a2f55,#1d2340)"></div>
<div class="a" style="left:0;top:734.6px;width:11px;height:7px;background:linear-gradient(90deg,#1f3550,#142030)"></div>
<div class="a" style="left:0;top:767.4000000000001px;width:11px;height:7px;background:linear-gradient(90deg,#202020,#5a4a20)"></div>
<div class="a" style="left:0;top:800.2px;width:11px;height:7px;background:linear-gradient(90deg,#303540,#b0b090)"></div>
<div class="a" style="left:0;top:833.0px;width:11px;height:7px;background:linear-gradient(90deg,#3a2418,#a04020)"></div>
<div class="a" style="left:0;top:865.8px;width:11px;height:7px;background:linear-gradient(90deg,#202830,#604050)"></div>
<div class="a" style="left:0;top:898.5999999999999px;width:11px;height:7px;background:linear-gradient(90deg,#384048,#607070)"></div>
<div class="a" style="left:0;top:931.4000000000001px;width:11px;height:7px;background:linear-gradient(90deg,#305050,#80a0a0)"></div>
<div class="a" style="left:0;top:964.2px;width:11px;height:7px;background:linear-gradient(90deg,#383838,#806050)"></div>
<div class="a" style="left:0;top:997.0px;width:11px;height:7px;background:linear-gradient(90deg,#303030,#505050)"></div>
<div class="a" style="left:0;top:570.6999999999999px;width:11px;height:2.2px;background:#4285f4"></div>
<div class="a" style="left:828.5px;top:283px;width:23.5px;height:715px;background:#fafafa"></div>
<svg class="a" style="left:828px;top:290px" width="24" height="14"><path d="M6.6 11.5 L11.8 5.5 L17 11.5 Z" fill="#8a8a8a"/></svg>
<div class="a" style="left:833.7px;top:311.7px;width:13.4px;height:338.5px;background:#8a8a8a;border-radius:6.7px"></div>
<svg class="a" style="left:0;top:0" width="852" height="998" viewBox="0 0 852 998">
<path d="M653.3 35.7 C651.6 35.4 646.4 33.6 643 34.1 C639.6 34.6 635.6 36.5 632.7 38.8 C629.8 41.1 627.1 44.2 625.4 48 C623.7 51.8 622.8 57.4 622.3 61.5 C621.8 65.7 621.4 69.8 622.3 72.9 C623.2 76.0 624.0 78.1 627.5 80 C631.0 81.9 637.8 83.2 643 84.2 C648.2 85.2 653.7 86.3 658.5 86.3 C663.3 86.3 668.0 85.9 672 84.2 C676.0 82.5 679.6 79.8 682.2 76 C684.8 72.2 686.3 66.5 687.4 61.5 C688.5 56.5 688.8 50.6 689 46 C689.2 41.4 689.2 36.9 688.4 33.6 C687.6 30.3 687.0 27.9 684.3 26.4 C681.6 24.8 676.3 24.5 672 24.3 C667.7 24.1 662.8 24.3 658.5 25.3 C654.2 26.3 648.9 29.2 646 30.5 C643.1 31.8 641.8 32.6 641 33" fill="none" stroke="#9ee21a" stroke-width="6.8" stroke-linecap="round" stroke-linejoin="round"/>
</svg>
</body></html>
